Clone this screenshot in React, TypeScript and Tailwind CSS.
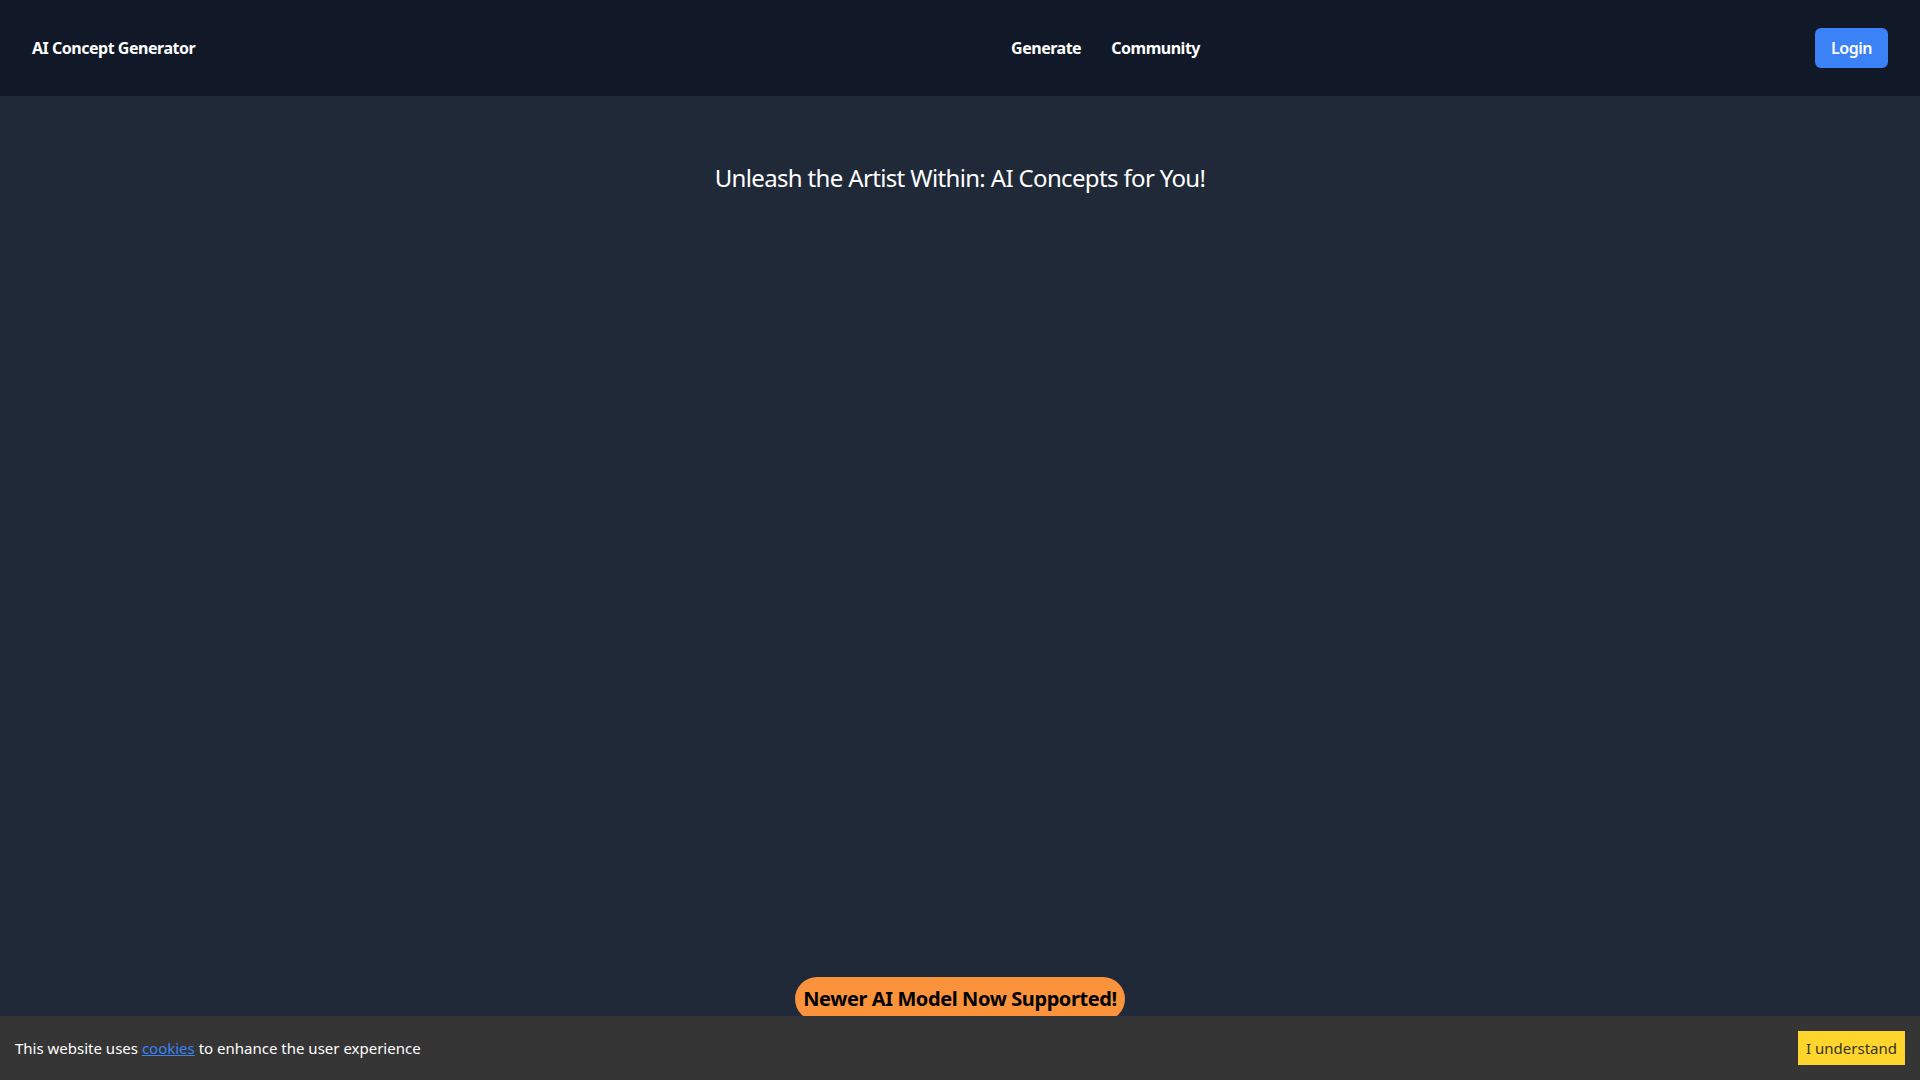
import React from 'react';

const font = { fontFamily: '"Noto Sans", "Open Sans", sans-serif' };

export default function App() {
  return (
    <div style={font} className="flex h-screen flex-col bg-[#1f2937] text-white">
      <header className="flex h-24 items-center bg-[#111827] px-8 tracking-[-0.03em]">
        <span className="text-base font-bold">AI Concept Generator</span>
        <nav className="ml-auto mr-[615px] flex items-center gap-[30px] text-base font-bold">
          <a href="#">Generate</a>
          <a href="#">Community</a>
        </nav>
        <button className="h-10 rounded-md bg-[#3b82f6] px-4 text-base font-semibold">Login</button>
      </header>

      <main className="flex flex-1 flex-col items-center pt-[66px]">
        <h1 className="text-2xl font-normal tracking-[-0.027em]">Unleash the Artist Within: AI Concepts for You!</h1>
        <div className="mb-[59px] mt-auto rounded-full bg-[#fb923c] px-2 py-2 text-xl font-bold tracking-[-0.02em] text-black">
          Newer AI Model Now Supported!
        </div>
      </main>

      <div className="fixed bottom-0 left-0 right-0 flex h-16 items-center justify-between bg-[#353535] text-[15px]">
        <div className="mx-[15px]">
          This website uses{' '}
          <a href="#" className="text-[#3b82f6] underline">cookies</a>{' '}
          to enhance the user experience
        </div>
        <button className="mx-[15px] h-[34px] bg-[#ffd42d] px-2 text-[15px] text-[#33341f]">I understand</button>
      </div>
    </div>
  );
}
